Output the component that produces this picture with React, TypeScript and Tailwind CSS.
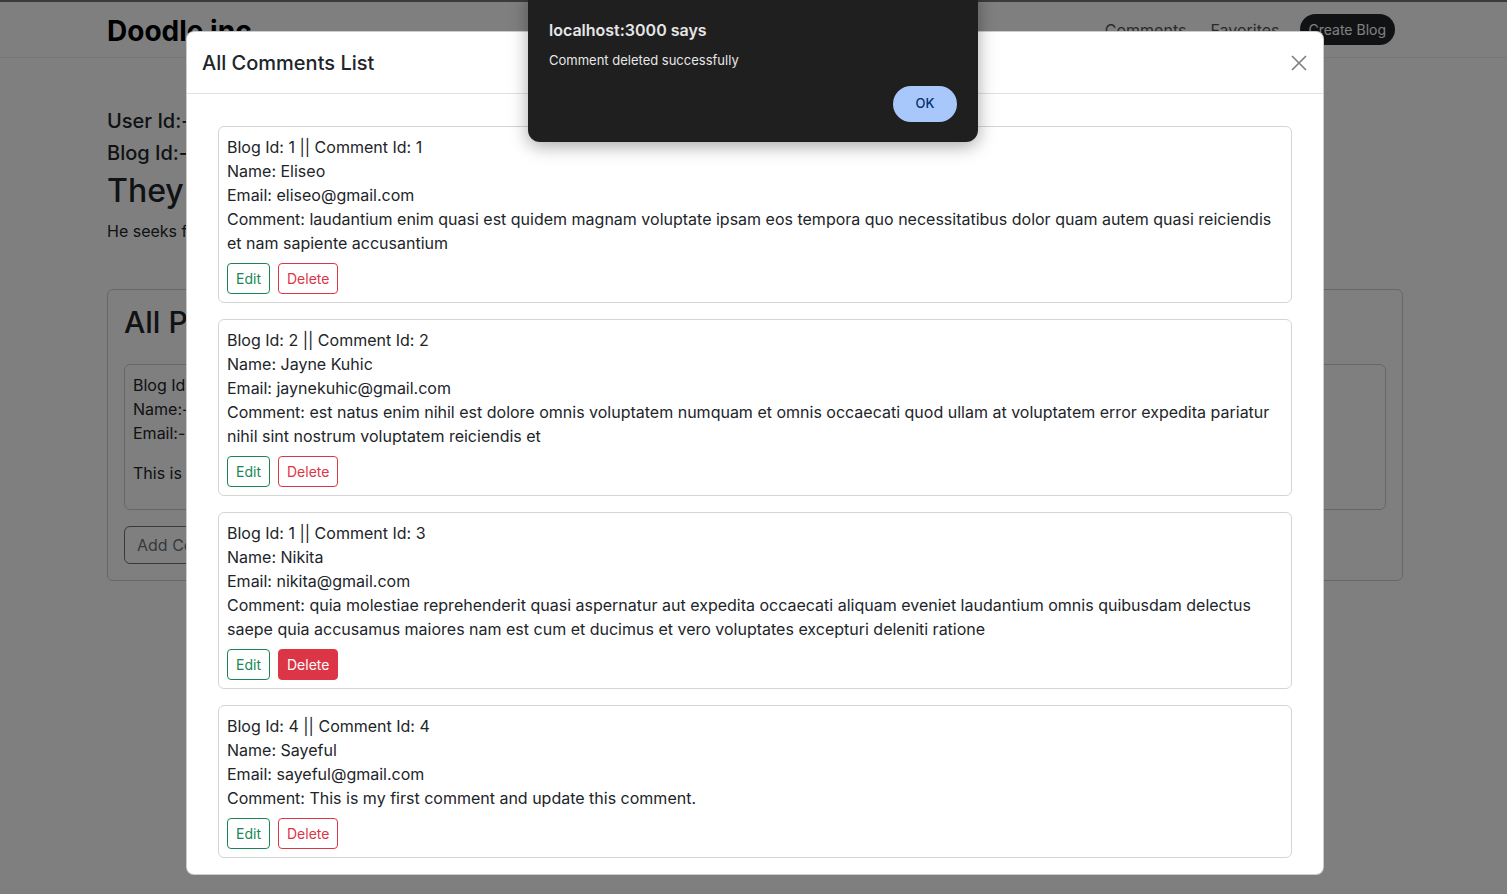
import React from "react";

type CommentItem = {
  blogId: number;
  id: number;
  name: string;
  email: string;
  lines: string[];
  active?: boolean;
};

const comments: CommentItem[] = [
  {
    blogId: 1,
    id: 1,
    name: "Eliseo",
    email: "eliseo@gmail.com",
    lines: [
      "Comment: laudantium enim quasi est quidem magnam voluptate ipsam eos tempora quo necessitatibus dolor quam autem quasi reiciendis",
      "et nam sapiente accusantium",
    ],
  },
  {
    blogId: 2,
    id: 2,
    name: "Jayne Kuhic",
    email: "jaynekuhic@gmail.com",
    lines: [
      "Comment: est natus enim nihil est dolore omnis voluptatem numquam et omnis occaecati quod ullam at voluptatem error expedita pariatur",
      "nihil sint nostrum voluptatem reiciendis et",
    ],
  },
  {
    blogId: 1,
    id: 3,
    name: "Nikita",
    email: "nikita@gmail.com",
    lines: [
      "Comment: quia molestiae reprehenderit quasi aspernatur aut expedita occaecati aliquam eveniet laudantium omnis quibusdam delectus",
      "saepe quia accusamus maiores nam est cum et ducimus et vero voluptates excepturi deleniti ratione",
    ],
    active: true,
  },
  {
    blogId: 4,
    id: 4,
    name: "Sayeful",
    email: "sayeful@gmail.com",
    lines: ["Comment: This is my first comment and update this comment."],
  },
];

function CommentCard({ c }: { c: CommentItem }) {
  return (
    <div className="mb-4 rounded-md border border-[#d5d5d5] p-2 text-base leading-6 text-[#212529]">
      <div>
        Blog Id: {c.blogId} || Comment Id: {c.id}
      </div>
      <div>Name: {c.name}</div>
      <div>Email: {c.email}</div>
      <div>
        {c.lines.map((l, i) => (
          <div key={i} className="whitespace-nowrap">
            {l}
          </div>
        ))}
      </div>
      <div className="mt-2 flex gap-2">
        <button className="h-[31px] rounded border border-[#198754] px-2 text-sm leading-[21px] text-[#198754]">
          Edit
        </button>
        {c.active ? (
          <button className="h-[31px] rounded border border-[#dc3545] bg-[#dc3545] px-2 text-sm leading-[21px] text-white">
            Delete
          </button>
        ) : (
          <button className="h-[31px] rounded border border-[#dc3545] px-2 text-sm leading-[21px] text-[#dc3545]">
            Delete
          </button>
        )}
      </div>
    </div>
  );
}

export default function App() {
  return (
    <div className="relative h-[894px] w-full overflow-hidden bg-white font-['Inter',_'Liberation_Sans',_sans-serif] text-[#212529]">
      {/* page behind the modal */}
      <nav className="h-[58px] border-t-2 border-b border-t-[#777777] border-b-[#ececec]">
        <div className="ml-[107px] flex h-full w-[1296px] items-center justify-between pr-2">
          <span className="pt-[2px] text-[28px] font-bold text-black">Doodle inc</span>
          <div className="flex items-center text-base text-[#555]">
            <span className="mr-6">Comments</span>
            <span className="mr-5">Favorites</span>
            <span className="flex h-[31px] items-center rounded-full bg-[#212529] px-[9px] text-sm text-white">
              Create Blog
            </span>
          </div>
        </div>
      </nav>

      <main className="ml-[107px] w-[1296px] pt-[47px]">
        <div className="text-xl leading-8 font-medium">User Id:- 1</div>
        <div className="text-xl leading-8 font-medium">Blog Id:- 1</div>
        <h1 className="mt-[2px] text-[32px] leading-10 font-medium">They were a happy family</h1>
        <p className="mt-2 text-base leading-6">He seeks fortune and glory in the big city.</p>

        <div className="mt-[46px] rounded-md border border-[#cfcfcf] px-4 pt-[14px] pb-4">
          <h2 className="text-[30px] leading-9 font-medium">All Post Comments</h2>
          <div className="mt-6 rounded-md border border-[#cfcfcf] p-2 text-base leading-6">
            <div>Blog Id:- 1</div>
            <div>Name:- Eliseo</div>
            <div>Email:- eliseo@gmail.com</div>
            <div className="mt-4 mb-4">This is a comment</div>
          </div>
          <button className="mt-4 h-[38px] rounded-md border border-[#6c757d] px-3 text-base text-[#6c757d]">
            Add Comment
          </button>
        </div>
      </main>

      {/* backdrop */}
      <div className="absolute inset-0 bg-black/50" />

      {/* modal */}
      <div className="absolute top-[31px] left-[186px] w-[1138px] rounded-lg border border-black/20 bg-white">
        <div className="flex h-[62px] items-center justify-between border-b border-[#dee2e6] pr-4 pl-[15px]">
          <h5 className="text-xl font-medium text-[#212529]">All Comments List</h5>
          <svg width="16" height="16" viewBox="0 0 16 16" className="opacity-50">
            <path d="M1 1 L15 15 M15 1 L1 15" stroke="#000" strokeWidth="1.6" />
          </svg>
        </div>
        <div className="px-[31px] pt-8 pb-0">
          {comments.map((c) => (
            <CommentCard key={c.id} c={c} />
          ))}
        </div>
      </div>

      {/* browser alert */}
      <div className="absolute top-[-12px] left-[528px] w-[450px] rounded-xl bg-[#1f1f1f] px-[21px] pt-[32px] pb-[20px] shadow-[0_4px_18px_rgba(0,0,0,0.35)]">
        <div className="text-base leading-5 font-semibold text-[#e6e6e6]">localhost:3000 says</div>
        <div className="mt-3 text-[13px] leading-4 text-[#e6e6e6]">Comment deleted successfully</div>
        <div className="mt-[18px] flex justify-end">
          <button className="h-9 w-16 rounded-full bg-[#a8c7fa] text-[13px] font-medium text-[#062e6f]">
            OK
          </button>
        </div>
      </div>
    </div>
  );
}
